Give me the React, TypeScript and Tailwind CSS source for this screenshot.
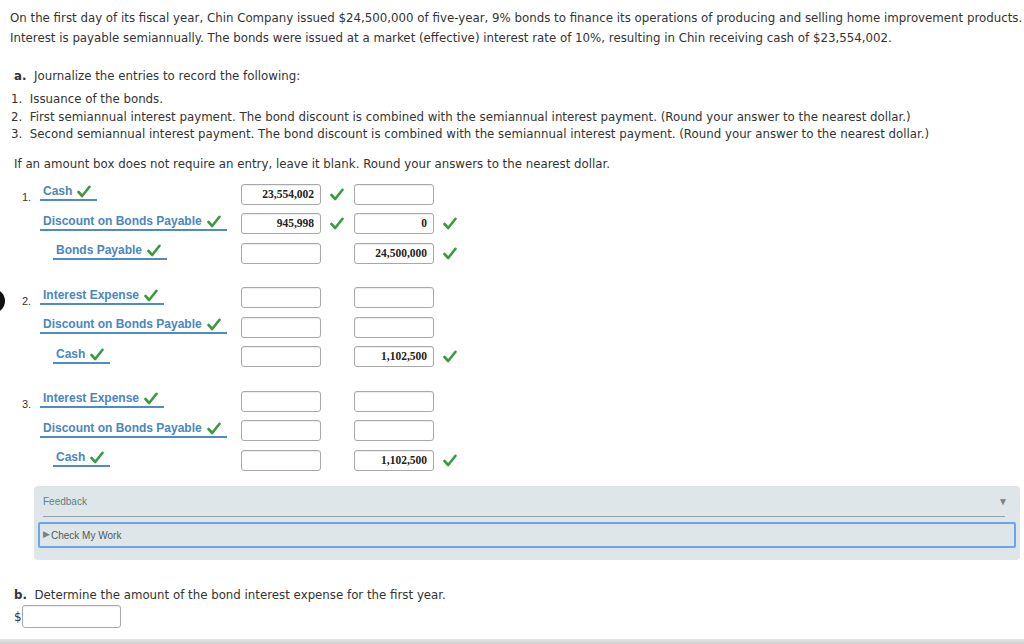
import React from 'react';

const Check = () => (
  <svg width="14" height="13" viewBox="0 0 14 13" className="shrink-0">
    <path d="M1.5 7 L5.2 11 L12.5 1.8" fill="none" stroke="#3b9a3f" strokeWidth="2.6" strokeLinecap="round" strokeLinejoin="round" />
  </svg>
);

type Row = {
  account: string;
  indent?: boolean;
  debit?: string;
  debitOk?: boolean;
  credit?: string;
  creditOk?: boolean;
};

const entries: { num: string; rows: Row[] }[] = [
  {
    num: '1.',
    rows: [
      { account: 'Cash', debit: '23,554,002', debitOk: true },
      { account: 'Discount on Bonds Payable', debit: '945,998', debitOk: true, credit: '0', creditOk: true },
      { account: 'Bonds Payable', indent: true, credit: '24,500,000', creditOk: true },
    ],
  },
  {
    num: '2.',
    rows: [
      { account: 'Interest Expense' },
      { account: 'Discount on Bonds Payable' },
      { account: 'Cash', indent: true, credit: '1,102,500', creditOk: true },
    ],
  },
  {
    num: '3.',
    rows: [
      { account: 'Interest Expense' },
      { account: 'Discount on Bonds Payable' },
      { account: 'Cash', indent: true, credit: '1,102,500', creditOk: true },
    ],
  },
];

const Amount = ({ value }: { value?: string }) => (
  <div className="w-[80px] h-[21px] shrink-0 rounded-[3px] border border-[#a8a8a8] bg-white shadow-[inset_0_1px_1px_rgba(0,0,0,0.08)] flex items-center justify-end pr-[6px] font-['Liberation_Serif',serif] font-bold text-[11.5px] text-[#222]">
    {value}
  </div>
);

const JournalRow = ({ row, num }: { row: Row; num?: string }) => (
  <div className="flex items-center h-[29.5px]">
    <div className="w-[40px] shrink-0 pl-[22px] pt-[6px] font-['Liberation_Sans',sans-serif] text-[11px] text-[#333]">
      {num}
    </div>
    <div className="w-[201px] shrink-0 mb-[4px]">
      <div
        className={`inline-flex items-end gap-[5px] border-b-2 border-[#4f8cc6] pl-[3px] pr-[6px] pb-[1px] ${
          row.indent ? 'ml-[13px]' : ''
        }`}
      >
        <span className="font-['Liberation_Sans',sans-serif] font-bold text-[12px] leading-[14px] text-[#4a86c2]">
          {row.account}
        </span>
        <Check />
      </div>
    </div>
    <Amount value={row.debit} />
    <div className="w-[33px] shrink-0 pl-[9px]">{row.debitOk && <Check />}</div>
    <Amount value={row.credit} />
    <div className="pl-[9px]">{row.creditOk && <Check />}</div>
  </div>
);

export default function App() {
  return (
    <div className="relative w-[1024px] h-[644px] overflow-hidden bg-white font-['DejaVu_Sans',Verdana,sans-serif] text-[11.8px] text-[#333]">
      <div className="absolute left-[-19px] top-[289px] w-[24px] h-[24px] rounded-full bg-[#111]" />

      <p className="pt-[8px] pl-[10px] leading-[20px] whitespace-nowrap">
        On the first day of its fiscal year, Chin Company issued $24,500,000 of five-year, 9% bonds to finance its operations of producing and selling home improvement products.
        <br />
        Interest is payable semiannually. The bonds were issued at a market (effective) interest rate of 10%, resulting in Chin receiving cash of $23,554,002.
      </p>

      <p className="mt-[19px] pl-[14px] leading-[18px]">
        <span className="font-bold">a.</span>&nbsp; Journalize the entries to record the following:
      </p>

      <ol className="mt-[6px] pl-[11px] leading-[17.5px] whitespace-nowrap">
        <li>1.&nbsp; Issuance of the bonds.</li>
        <li>2.&nbsp; First semiannual interest payment. The bond discount is combined with the semiannual interest payment. (Round your answer to the nearest dollar.)</li>
        <li>3.&nbsp; Second semiannual interest payment. The bond discount is combined with the semiannual interest payment. (Round your answer to the nearest dollar.)</li>
      </ol>

      <p className="mt-[11px] pl-[14px] leading-[18px]">
        If an amount box does not require an entry, leave it blank. Round your answers to the nearest dollar.
      </p>

      <div className="mt-[7px] flex flex-col gap-[15px]">
        {entries.map((e) => (
          <div key={e.num}>
            {e.rows.map((r, i) => (
              <JournalRow key={i} row={r} num={i === 0 ? e.num : undefined} />
            ))}
          </div>
        ))}
      </div>

      <div className="mt-[11px] ml-[34px] w-[986px] h-[74px] rounded-[4px] bg-[#dfe6e9] px-[4px] pt-[8px] font-['Liberation_Sans',sans-serif] text-[10px]">
        <div className="flex items-center justify-between px-[5px] pr-[8px] h-[14px]">
          <span className="text-[#5f7f82]">Feedback</span>
          <span className="text-[#808080] text-[10px]">▼</span>
        </div>
        <div className="mt-[8px] mx-[5px] mr-[11px] h-px bg-[#9aa0a2]" />
        <div className="mt-[5px] h-[26px] rounded-[2px] border-2 border-[#6fa4e8] flex items-center pl-[3px] text-[#4c5a5e]">
          <span className="text-[#808080] text-[9px] mr-[1px]">▶</span>
          Check My Work
        </div>
      </div>

      <p className="mt-[27px] pl-[14px] leading-[16px]">
        <span className="font-bold">b.</span>&nbsp; Determine the amount of the bond interest expense for the first year.
      </p>
      <div className="mt-[2px] pl-[14px] flex items-center">
        <span className="text-[12px] leading-none">$</span>
        <div className="w-[99px] h-[23px] rounded-[3px] border border-[#a8a8a8] bg-white shadow-[inset_0_1px_1px_rgba(0,0,0,0.08)]" />
      </div>

      <div className="absolute left-0 bottom-0 w-full h-[5px] bg-gradient-to-b from-[#e4e4e4] to-[#d0d0d0]" />
    </div>
  );
}
